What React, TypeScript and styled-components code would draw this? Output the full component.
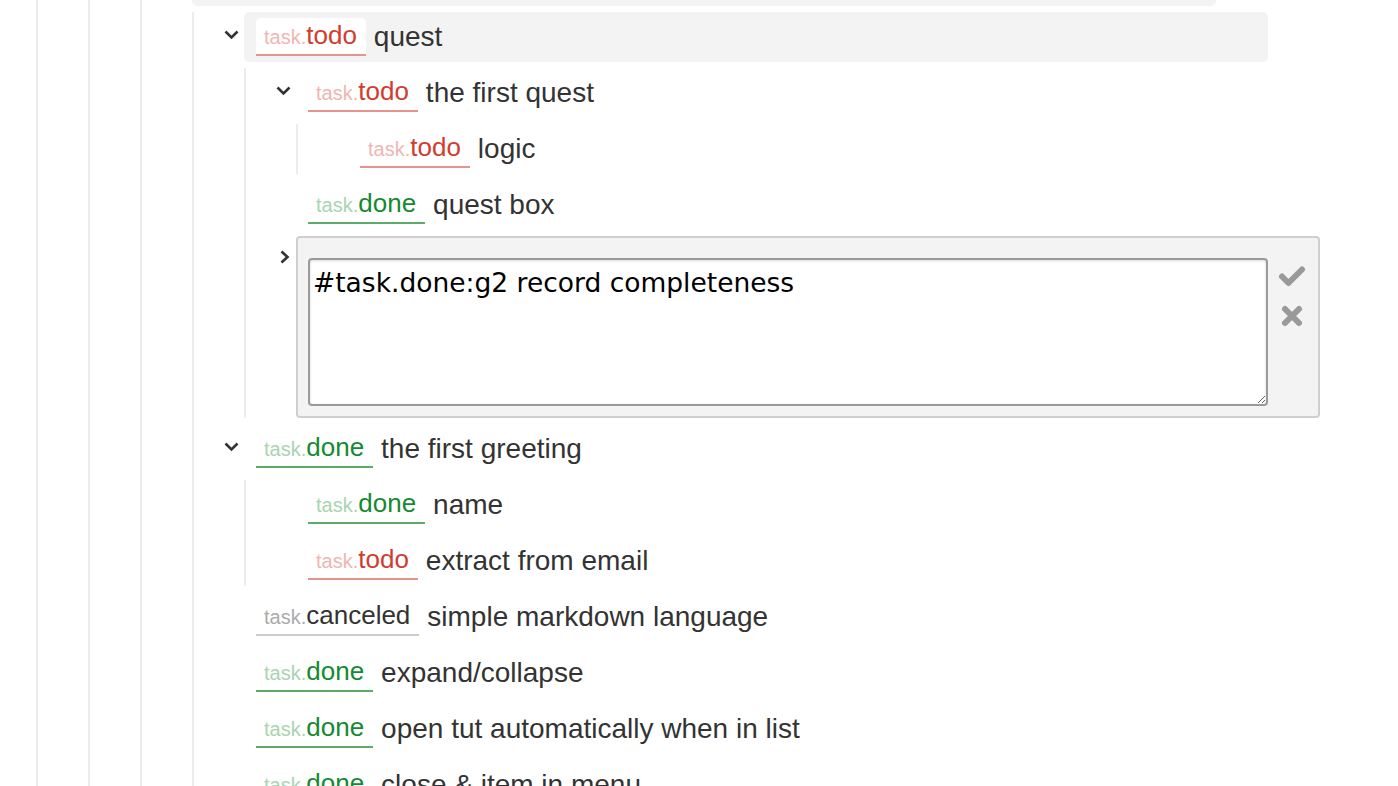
import { useEffect, useRef } from "react";
import styled, { createGlobalStyle, css } from "styled-components";

type Status = "todo" | "done" | "canceled";

interface Item {
  status: Status;
  text: string;
  open?: boolean;
  highlighted?: boolean;
  editing?: boolean;
  children?: Item[];
}

const GlobalStyle = createGlobalStyle`
  html, body {
    margin: 0;
    padding: 0;
    background: #fff;
    overflow: hidden;
  }

  body {
    font-family: "Liberation Sans", Arial, sans-serif;
    color: #333;
  }
`;

const Page = styled.div`
  margin-top: -44px;
  padding-left: 36px;
`;

const List = styled.div`
  display: flex;
  flex-direction: column;
  gap: 6px;

  border-left: 2px solid #ececec;
  padding-left: 50px;
`;

const Node = styled.div`
  display: flex;
  flex-direction: column;
  gap: 6px;
`;

const Row = styled.div<{ $highlighted?: boolean }>`
  position: relative;
  display: flex;
  align-items: flex-start;
  gap: 8px;

  box-sizing: border-box;
  width: 1024px;
  height: 50px;
  padding-left: 12px;
  border-radius: 5px;

  ${({ $highlighted }) =>
    $highlighted &&
    css`
      background: #f3f3f3;
    `}
`;

const Chevron = styled.span<{ $open: boolean }>`
  position: absolute;
  display: flex;
  color: #333;

  ${({ $open }) =>
    $open
      ? css`
          left: -20px;
          top: 18px;
        `
      : css`
          left: -18px;
          top: 12px;
        `}
`;

const tagColors: Record<Status, { prefix: string; value: string; line: string }> = {
  todo: { prefix: "#f0b5b0", value: "#d23c2e", line: "#e6958e" },
  done: { prefix: "#a7d5b1", value: "#148a30", line: "#5bac6b" },
  canceled: { prefix: "#aaaaaa", value: "#333333", line: "#cccccc" },
};

const Tag = styled.div<{ $status: Status }>`
  flex: none;
  box-sizing: border-box;
  height: 38px;
  margin-top: 6px;
  padding: 0 9px 0 8px;

  background: #fff;
  border-radius: 5px 5px 0 0;
  border-bottom: 2px solid ${({ $status }) => tagColors[$status].line};

  line-height: 34px;
  white-space: nowrap;
`;

const TagPrefix = styled.span<{ $status: Status }>`
  font-size: 20px;
  color: ${({ $status }) => tagColors[$status].prefix};
`;

const TagValue = styled.span<{ $status: Status }>`
  font-size: 26px;
  color: ${({ $status }) => tagColors[$status].value};
`;

const Label = styled.span`
  font-size: 28px;
  line-height: 50px;
  color: #333;
  white-space: nowrap;
`;

const EditBox = styled.div`
  position: relative;
  display: flex;
  gap: 10px;

  box-sizing: border-box;
  width: 1024px;
  padding: 20px 12px 10px 10px;

  background: #f3f3f3;
  border: 2px solid #cfcfcf;
  border-radius: 4px;
`;

const Editor = styled.textarea`
  flex: 1;
  box-sizing: border-box;
  height: 148px;
  margin: 0;
  padding: 7px 3px;

  font-family: "DejaVu Sans", "Liberation Sans", sans-serif;
  font-size: 26.5px;
  line-height: 32px;
  color: #000;
  caret-color: #000;

  background: #fff;
  border: 2px solid #9a9a9a;
  border-radius: 4px;
  box-shadow: inset 0 1px 3px rgba(0, 0, 0, 0.15);
  outline: none;
  resize: vertical;
`;

const EditActions = styled.div`
  display: flex;
  flex-direction: column;
  align-items: center;
  gap: 18px;

  width: 28px;
  padding-top: 7px;
  color: #999;
`;

function ChevronIcon({ open }: { open: boolean }) {
  return open ? (
    <svg width="15" height="10" viewBox="0 0 15 10">
      <path d="M1.5 1.5 L7.5 7.5 L13.5 1.5" fill="none" stroke="currentColor" strokeWidth="2.6" />
    </svg>
  ) : (
    <svg width="10" height="14" viewBox="0 0 10 14">
      <path d="M1.5 1.5 L7.5 7 L1.5 12.5" fill="none" stroke="currentColor" strokeWidth="2.6" />
    </svg>
  );
}

function CheckIcon() {
  return (
    <svg width="28" height="22" viewBox="0 0 28 22">
      <path
        d="M4 11.5 L10.5 18 L24 4.5"
        fill="none"
        stroke="currentColor"
        strokeWidth="6"
        strokeLinecap="round"
        strokeLinejoin="round"
      />
    </svg>
  );
}

function CloseIcon() {
  return (
    <svg width="22" height="22" viewBox="0 0 22 22">
      <path
        d="M4 4 L18 18 M18 4 L4 18"
        fill="none"
        stroke="currentColor"
        strokeWidth="6"
        strokeLinecap="round"
      />
    </svg>
  );
}

function TaskTag({ status }: { status: Status }) {
  return (
    <Tag $status={status}>
      <TagPrefix $status={status}>task.</TagPrefix>
      <TagValue $status={status}>{status}</TagValue>
    </Tag>
  );
}

function InlineEditor({ value, hasChildren }: { value: string; hasChildren: boolean }) {
  const ref = useRef<HTMLTextAreaElement>(null);

  useEffect(() => {
    const el = ref.current;
    if (!el) return;
    el.focus();
    el.setSelectionRange(value.length, value.length);
  }, [value]);

  return (
    <EditBox>
      {hasChildren && (
        <Chevron $open={false}>
          <ChevronIcon open={false} />
        </Chevron>
      )}
      <Editor ref={ref} defaultValue={value} spellCheck={false} />
      <EditActions>
        <CheckIcon />
        <CloseIcon />
      </EditActions>
    </EditBox>
  );
}

function TreeNode({ item }: { item: Item }) {
  const hasChildren = !!item.children && item.children.length > 0;

  return (
    <Node>
      {item.editing ? (
        <InlineEditor value={`#task.${item.status}:g2 ${item.text}`} hasChildren={hasChildren} />
      ) : (
        <Row $highlighted={item.highlighted}>
          {hasChildren && (
            <Chevron $open={!!item.open}>
              <ChevronIcon open={!!item.open} />
            </Chevron>
          )}
          <TaskTag status={item.status} />
          <Label>{item.text}</Label>
        </Row>
      )}
      {hasChildren && item.open && (
        <List>
          {item.children!.map((child, i) => (
            <TreeNode key={i} item={child} />
          ))}
        </List>
      )}
    </Node>
  );
}

const items: Item[] = [
  {
    status: "todo",
    text: "quest",
    open: true,
    highlighted: true,
    children: [
      {
        status: "todo",
        text: "the first quest",
        open: true,
        children: [{ status: "todo", text: "logic" }],
      },
      { status: "done", text: "quest box" },
      {
        status: "done",
        text: "record completeness",
        editing: true,
        children: [{ status: "todo", text: "hidden" }],
      },
    ],
  },
  {
    status: "done",
    text: "the first greeting",
    open: true,
    children: [
      { status: "done", text: "name" },
      { status: "todo", text: "extract from email" },
    ],
  },
  { status: "canceled", text: "simple markdown language" },
  { status: "done", text: "expand/collapse" },
  { status: "done", text: "open tut automatically when in list" },
  { status: "done", text: "close & item in menu" },
];

function App() {
  return (
    <>
      <GlobalStyle />
      <Page>
        <List>
          <List>
            <List>
              <Node>
                <Row $highlighted />
                <List>
                  {items.map((item, i) => (
                    <TreeNode key={i} item={item} />
                  ))}
                </List>
              </Node>
            </List>
          </List>
        </List>
      </Page>
    </>
  );
}

export default App;
